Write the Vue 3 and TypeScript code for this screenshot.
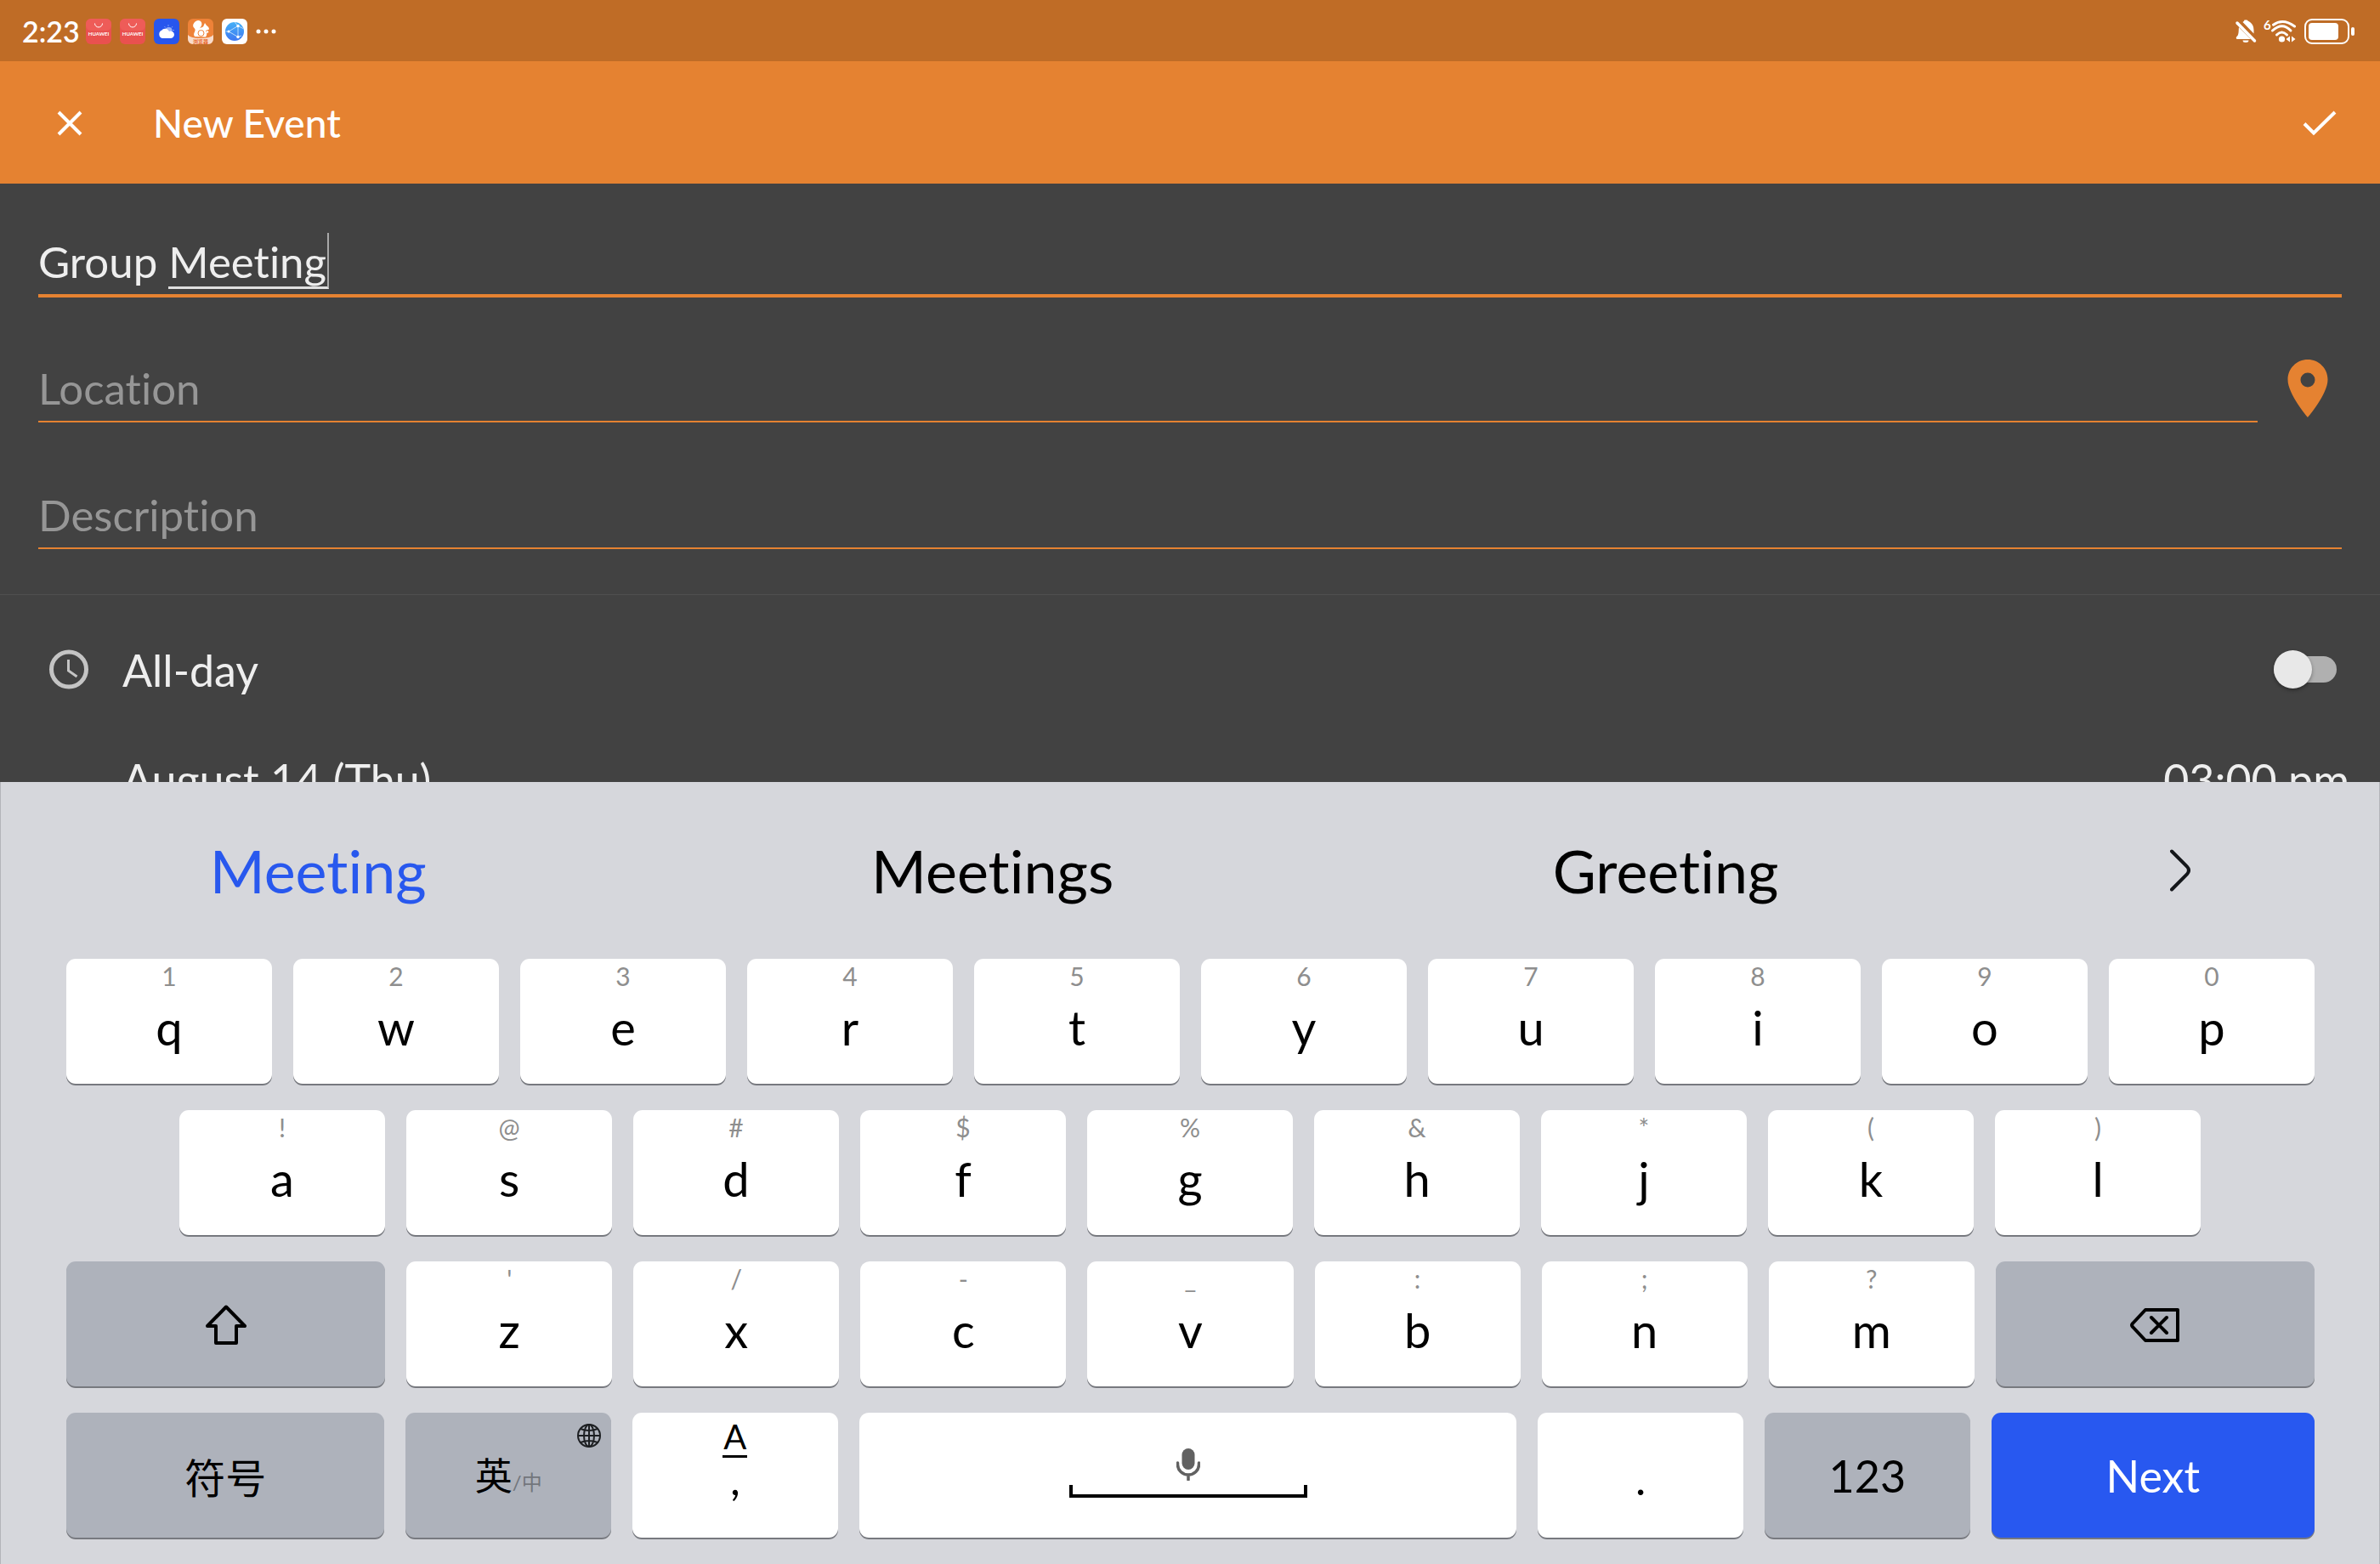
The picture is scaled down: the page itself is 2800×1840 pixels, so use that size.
<script setup lang="ts">
import { nextTick, onMounted, ref } from 'vue'

interface KeyDef {
  label: string
  hint: string
}

const makeRow = (letters: string, hints: string): KeyDef[] =>
  [...letters].map((label, i) => ({ label, hint: hints[i] }))

const rowOne = makeRow('qwertyuiop', '1234567890')
const rowTwo = makeRow('asdfghjkl', '!@#$%&*()')
const rowThree = makeRow('zxcvbnm', "'/-_:;?")

const suggestions = ['Meeting', 'Meetings', 'Greeting']

const title = ref('Group Meeting')
const place = ref('')
const description = ref('')
const allDay = ref(false)

// The word being composed is underlined, with the caret at its end.
const titleInput = ref<HTMLInputElement | null>(null)
const composing = ref({ left: 0, width: 0 })

function measureComposing() {
  const input = titleInput.value
  const ctx = document.createElement('canvas').getContext('2d')
  if (!input || !ctx) return
  const style = getComputedStyle(input)
  ctx.font = `${style.fontWeight} ${style.fontSize} ${style.fontFamily}`
  const start = title.value.lastIndexOf(' ') + 1
  const left = Math.round(ctx.measureText(title.value.slice(0, start)).width)
  // Measured letter by letter, since the field shows no ligatures.
  const end = [...title.value.slice(start)].reduce(
    (sum, letter) => sum + ctx.measureText(letter).width,
    left,
  )
  composing.value = { left, width: Math.round(end) - left + 2 }
}

onMounted(async () => {
  await nextTick()
  measureComposing()
})
</script>

<template>
  <div class="screen">
    <div class="status-bar">
      <div class="status-left">
        <span class="clock-text">2:23</span>
        <svg v-for="n in 2" :key="n" class="app-icon" viewBox="0 0 30 30" aria-hidden="true">
          <rect width="30" height="30" rx="6" fill="#e9514f" />
          <rect width="30" height="14" rx="6" fill="#ee5c58" />
          <path d="M10.500 5.500a4.500 4.500 0 0 0 9 0" fill="none" stroke="#fff" stroke-width="1" />
          <text x="15" y="19.500" text-anchor="middle" font-size="6" font-weight="700" fill="#fff">HUAWEI</text>
        </svg>
        <svg class="app-icon" viewBox="0 0 30 30" aria-hidden="true">
          <rect width="30" height="30" rx="6" fill="#2756ee" />
          <path d="M17 7v2M22 9l-1 1.500M24 13.500h-2M12.500 9l1 1.500" stroke="#7f9df6" stroke-width="1" />
          <circle cx="17.500" cy="14" r="4" fill="#9db4f9" />
          <path d="M10 23a5 5 0 0 1-.5-9.500a5 5 0 0 1 8.500 1.500a4.200 4.200 0 1 1 2 8z" fill="#fff" />
        </svg>
        <svg class="app-icon" viewBox="0 0 30 30" aria-hidden="true">
          <rect width="30" height="30" rx="6" fill="#ee8238" />
          <path d="M0 19q3 4 15 4t15-4v5a6 6 0 0 1-6 6H6a6 6 0 0 1-6-6z" fill="#f8dccb" />
          <path
            d="M8 21C5 17 11 14 7.500 11C4 8 8 2 12.500 2C18 3 17 9 13.500 11.500C16 10 17 10 18 9.500L20 5l2 3c2 1 3 3 3 4.500l-4 1.500c1.500 2 2 5 0 7.500z"
            fill="#fff"
          />
          <circle cx="15.500" cy="17" r="3.500" fill="none" stroke="#ee8238" stroke-width="1" />
          <circle cx="23" cy="15.500" r="1.300" fill="#fff" />
          <text x="15" y="28.500" text-anchor="middle" font-size="6" font-weight="700" fill="#e8682a">浏览器</text>
        </svg>
        <svg class="app-icon" viewBox="0 0 30 30" aria-hidden="true">
          <defs>
            <linearGradient id="globe-fill" x1="0" y1="0" x2="0" y2="1">
              <stop offset="0" stop-color="#45b0f6" />
              <stop offset="1" stop-color="#3f78f2" />
            </linearGradient>
          </defs>
          <rect width="30" height="30" rx="6" fill="#fff" />
          <circle cx="15" cy="15" r="11" fill="url(#globe-fill)" />
          <path d="M8 15L19 8.500v13zM15 4l4 4.500l6 3M4.500 15H8M19 21.500l4-1.500" fill="none" stroke="#b9dcfb" stroke-width="1" />
          <circle cx="19" cy="8.500" r="1.700" fill="#fff" />
          <circle cx="19" cy="21.500" r="1.700" fill="#fff" />
          <circle cx="8" cy="15" r="1.500" fill="#fff" />
        </svg>
        <svg class="more-icon" viewBox="0 0 24 30" aria-hidden="true">
          <circle cx="3" cy="15" r="2.500" fill="#fff" />
          <circle cx="12" cy="15" r="2.500" fill="#fff" />
          <circle cx="21" cy="15" r="2.500" fill="#fff" />
        </svg>
      </div>
      <div class="status-right">
        <svg class="bell-icon" viewBox="0 0 26 30" aria-hidden="true">
          <path d="M9.500 4C10.500 3 11 3 11.500 1.500h3c.5 1.500 8 2.500 8 12v4z" fill="#fff" />
          <path d="M5 10L19 24H2.500c-1-1-1-2 0-3C5 19 4.500 15 5 10z" fill="#fff" />
          <path d="M9.500 25.500h7a3.500 2.500 0 0 1-7 0z" fill="#fff" />
          <path d="M3 5L23.500 26" stroke="#fff" stroke-width="3.500" stroke-linecap="round" />
          <path d="M6 3L24 21.500" stroke="#bf6c26" stroke-width="1.500" />
        </svg>
        <svg class="wifi-icon" viewBox="0 0 40 30" aria-hidden="true">
          <text x="0" y="13" font-size="15" font-weight="700" fill="#fff">6</text>
          <g fill="none" stroke="#fff" stroke-width="3" stroke-linecap="round">
            <path d="M11.500 7.200Q23 -1 36.500 9" />
            <path d="M10.500 14Q22 3.500 32 14" />
            <path d="M15.500 19Q21.500 13 27.500 19" />
          </g>
          <circle cx="21.500" cy="24" r="3.600" fill="#fff" />
          <path d="M31 20.500v7l-4.500-3.500zM33 20.500l4.500 3.500l-4.500 3.500z" fill="#fff" />
        </svg>
        <svg class="battery-icon" viewBox="0 0 60 30" aria-hidden="true">
          <rect x="1" y="1" width="51" height="28" rx="8" fill="none" stroke="#fff" stroke-width="2" />
          <rect x="5" y="5" width="35" height="20" rx="4" fill="#fff" />
          <rect x="55" y="10" width="4" height="10" rx="2" fill="#fff" />
        </svg>
      </div>
    </div>

    <header class="app-bar">
      <button class="icon-button" type="button" aria-label="Close">
        <svg width="30" height="30" viewBox="0 0 30 30">
          <path d="M2 2L28 28M28 2L2 28" stroke="#fff" stroke-width="4" />
        </svg>
      </button>
      <h1 class="app-title">New Event</h1>
      <button class="icon-button done" type="button" aria-label="Save">
        <svg width="40" height="30" viewBox="0 0 40 30">
          <path d="M2 15.500L13 26.500L38 2" fill="none" stroke="#fff" stroke-width="4" />
        </svg>
      </button>
    </header>

    <main class="form">
      <section class="fields">
        <div class="field focused">
          <input
            ref="titleInput"
            v-model="title"
            class="text-input"
            type="text"
            aria-label="Title"
            spellcheck="false"
            @input="measureComposing"
          />
          <span
            class="composing"
            :style="{ left: composing.left + 'px', width: composing.width + 'px' }"
          ></span>
        </div>
        <div class="field-row">
          <div class="field grow">
            <input v-model="place" class="text-input" type="text" placeholder="Location" aria-label="Location" />
          </div>
          <button class="pin-button" type="button" aria-label="Show on map">
            <svg width="48" height="70" viewBox="0 0 48 70">
              <path
                fill="#e58231"
                fill-rule="evenodd"
                d="M24 1C11 1 .500 11.500.500 24.500C.500 42 24 69 24 69S47.500 42 47.500 24.500C47.500 11.500 37 1 24 1zM24 33.500a8.500 8.500 0 1 1 0-17a8.500 8.500 0 0 1 0 17z"
              />
            </svg>
          </button>
        </div>
        <div class="field">
          <input
            v-model="description"
            class="text-input"
            type="text"
            placeholder="Description"
            aria-label="Description"
          />
        </div>
      </section>

      <label class="all-day">
        <svg class="clock-icon" width="48" height="48" viewBox="0 0 48 48" aria-hidden="true">
          <circle cx="24" cy="23.500" r="20.500" fill="none" stroke="#c4c4c4" stroke-width="5" />
          <path d="M23.500 12v13l10 7" fill="none" stroke="#c4c4c4" stroke-width="3" />
        </svg>
        <span class="all-day-text">All-day</span>
        <input v-model="allDay" class="switch" type="checkbox" role="switch" />
      </label>
      <div class="when">
        <button class="when-button" type="button">August 14 (Thu)</button>
        <button class="when-button" type="button">03:00 pm</button>
      </div>
    </main>

    <section class="keyboard" aria-label="Keyboard">
      <div class="suggestions">
        <button
          v-for="(word, i) in suggestions"
          :key="word"
          class="suggestion"
          :class="{ active: i === 0 }"
          type="button"
        >
          {{ word }}
        </button>
        <button class="suggestion" type="button" aria-label="More suggestions">
          <svg width="24" height="50" viewBox="0 0 24 50">
            <path
              d="M2 2.500L20 20.500Q24 25 20 29.500L2 47.500"
              fill="none"
              stroke="#14161a"
              stroke-width="4"
              stroke-linecap="round"
            />
          </svg>
        </button>
      </div>

      <div class="rows">
        <div class="row">
          <button v-for="key in rowOne" :key="key.label" class="key" type="button">
            <span class="hint">{{ key.hint }}</span>
            <span class="letter">{{ key.label }}</span>
          </button>
        </div>
        <div class="row inset">
          <button v-for="key in rowTwo" :key="key.label" class="key" type="button">
            <span class="hint">{{ key.hint }}</span>
            <span class="letter">{{ key.label }}</span>
          </button>
        </div>
        <div class="row">
          <button class="key gray wide middle" type="button" aria-label="Shift">
            <svg width="50" height="48" viewBox="0 0 50 48">
              <path
                d="M25 3.500L47 26H37V46H13V26H3z"
                fill="none"
                stroke="#000"
                stroke-width="4"
                stroke-linejoin="round"
              />
            </svg>
          </button>
          <button v-for="key in rowThree" :key="key.label" class="key" type="button">
            <span class="hint">{{ key.hint }}</span>
            <span class="letter">{{ key.label }}</span>
          </button>
          <button class="key gray wide middle" type="button" aria-label="Delete">
            <svg width="60" height="42" viewBox="0 0 60 42">
              <g fill="none" stroke="#000" stroke-width="4" stroke-linejoin="round" stroke-linecap="round">
                <path d="M19 4H57V40H19L4 24Q2 22 4 20z" />
                <path d="M26 13L44 31M44 13L26 31" />
              </g>
            </svg>
          </button>
        </div>
        <div class="row">
          <button class="key gray wide middle cjk" type="button">符号</button>
          <button class="key gray middle language" type="button">
            <span class="lang-main">英</span><span class="lang-alt">/中</span>
            <svg class="globe" width="28" height="28" viewBox="0 0 28 28" aria-hidden="true">
              <g fill="none" stroke="#1d1f22" stroke-width="2">
                <circle cx="14" cy="14" r="13" />
                <ellipse cx="14" cy="14" rx="6" ry="13" />
                <path d="M14 1v26M1 14h26M4 6q10 4 20 0M4 22q10-4 20 0" />
              </g>
            </svg>
          </button>
          <button class="key comma" type="button">
            <span class="alt-mark">A</span>
            <span class="mark">,</span>
          </button>
          <button class="key space" type="button" aria-label="Space">
            <svg width="28" height="38" viewBox="0 0 28 38">
              <rect x="6.500" y="0" width="15" height="25" rx="7.500" fill="#616161" />
              <path
                d="M1.500 17v2a12.500 12 0 0 0 25 0v-2M14 31v6"
                fill="none"
                stroke="#616161"
                stroke-width="3.500"
                stroke-linecap="round"
              />
            </svg>
            <span class="space-mark"></span>
          </button>
          <button class="key period" type="button"><span class="mark">.</span></button>
          <button class="key gray middle word" type="button">123</button>
          <button class="key next middle word" type="button">Next</button>
        </div>
      </div>
    </section>
  </div>
</template>

<style>
body {
  margin: 0;
  background: #424242;
}
</style>

<style scoped>
.screen {
  display: flex;
  flex-direction: column;
  height: 100vh;
  overflow: hidden;
  background: #424242;
  color: #eee;
  font-family: Lato, 'Noto Sans CJK SC', sans-serif;
  font-variant-ligatures: none;
}

.screen * {
  box-sizing: border-box;
}

svg {
  display: block;
  flex: none;
}

button,
input {
  margin: 0;
  padding: 0;
  border: 0;
  background: none;
  color: inherit;
  font: inherit;
  font-variant-ligatures: none;
}

/* Status bar */
.status-bar {
  flex: none;
  display: flex;
  align-items: center;
  justify-content: space-between;
  height: 72px;
  padding: 2px 29px 0 26px;
  background: #bf6c26;
  color: #fff;
}

.status-left,
.status-right {
  display: flex;
  align-items: center;
}

.status-left {
  gap: 10px;
}

.status-right {
  gap: 8px;
}

.clock-text {
  width: 65px;
  font-size: 34px;
  font-weight: 600;
  line-height: 40px;
  white-space: nowrap;
}

.app-icon {
  width: 30px;
  height: 30px;
}

.more-icon {
  width: 24px;
  height: 30px;
}

.bell-icon {
  width: 26px;
  height: 30px;
}

.wifi-icon {
  width: 40px;
  height: 30px;
}

.battery-icon {
  width: 60px;
  height: 30px;
}

/* App bar */
.app-bar {
  flex: none;
  display: flex;
  align-items: center;
  height: 144px;
  padding: 1px 51px 0 67px;
  background: #e58231;
  color: #fff;
}

.icon-button {
  display: flex;
}

.app-title {
  margin: 0 0 0 83px;
  font-size: 46px;
  font-weight: 500;
  line-height: 56px;
}

.done {
  margin-left: auto;
}

/* Form */
.form {
  flex: 1 1 0;
  min-height: 0;
  overflow: hidden;
  font-size: 52px;
}

.fields {
  display: flex;
  flex-direction: column;
  gap: 65px;
  padding: 50px 45px 51px;
  border-bottom: 1px solid #4f4f4f;
}

.field {
  position: relative;
  height: 84px;
}

.field-row {
  display: flex;
  align-items: flex-start;
}

.grow {
  flex: 1;
}

.text-input {
  display: block;
  width: 100%;
  height: 82px;
  padding: 3px 0 0;
  border-bottom: 2px solid #e58231;
  border-radius: 0;
  outline: none;
  font-size: 51px;
  line-height: 64px;
}

.focused .text-input {
  height: 84px;
  border-bottom-width: 4px;
}

.text-input::placeholder {
  color: #969696;
  opacity: 1;
}

.composing {
  position: absolute;
  top: 8px;
  height: 66px;
  border-right: 2px solid #a8a8a8;
  border-bottom: 3px solid #e0e0e0;
  pointer-events: none;
}

.pin-button {
  display: flex;
  margin: 7px 16px 0 35px;
}

.all-day {
  display: flex;
  align-items: center;
  height: 175px;
  padding: 0 51px 0 57px;
}

.all-day-text {
  flex: 1;
  margin-left: 39px;
  line-height: 64px;
}

.switch {
  appearance: none;
  position: relative;
  flex: none;
  width: 74px;
  height: 31px;
  border-radius: 16px;
  background: #b0b0b0;
}

.switch::before {
  content: '';
  position: absolute;
  top: -7px;
  left: 0;
  width: 45px;
  height: 45px;
  border-radius: 50%;
  background: #e8e8e8;
  box-shadow: 0 2px 4px rgba(0, 0, 0, 0.35);
}

.when {
  display: flex;
  justify-content: space-between;
  padding: 0 36px 0 144px;
}

.when-button {
  height: 84px;
  line-height: 84px;
}

/* Keyboard */
.keyboard {
  flex: none;
  border: solid #b3b4b9;
  border-width: 0 1px;
  background: #d6d7dc;
  color: #000;
}

.suggestions {
  display: grid;
  grid-template-columns: 747fr 841fr 744fr 468fr;
  height: 208px;
}

.suggestion {
  display: flex;
  align-items: center;
  justify-content: center;
  font-size: 70px;
  line-height: 88px;
}

.suggestion.active {
  color: #2858ee;
}

.rows {
  display: flex;
  flex-direction: column;
  gap: 31px;
  padding: 0 76px 31px 77px;
}

.row {
  display: flex;
  gap: 25px;
}

.inset {
  padding: 0 134px 0 133px;
}

.key {
  flex: 242 1 0;
  display: flex;
  flex-direction: column;
  align-items: center;
  min-width: 0;
  height: 147px;
  border-radius: 11px;
  background: #fff;
  box-shadow: 0 2px 0 #77797f;
}

.gray {
  background: #aeb2bb;
}

.wide {
  flex-grow: 375;
}

.middle {
  justify-content: center;
}

.hint {
  margin-top: 4px;
  color: #8e8e8e;
  font-size: 30px;
  line-height: 32px;
}

.letter {
  font-size: 56px;
  line-height: 90px;
}

.cjk {
  font-size: 48px;
}

.language {
  position: relative;
  flex-direction: row;
  align-items: baseline;
  padding-top: 42px;
}

.lang-main {
  font-size: 44px;
  line-height: 64px;
}

.lang-alt {
  color: #73767c;
  font-size: 24px;
}

.globe {
  position: absolute;
  top: 13px;
  right: 12px;
}

.alt-mark {
  height: 47px;
  margin-top: 6px;
  padding: 0 1px;
  border-bottom: 3px solid #000;
  font-size: 40px;
  line-height: 44px;
}

.mark {
  margin-top: auto;
  font-size: 52px;
  line-height: 48px;
}

.comma,
.period {
  padding-bottom: 46px;
}

.space {
  flex-grow: 775;
  padding-top: 42px;
}

.space-mark {
  width: 280px;
  height: 15px;
  margin-top: 5px;
  border: 4px solid #000;
  border-top: 0;
}

.word {
  font-size: 52px;
  line-height: 64px;
}

.next {
  flex-grow: 381;
  background: #2858f0;
  color: #fff;
}
</style>
